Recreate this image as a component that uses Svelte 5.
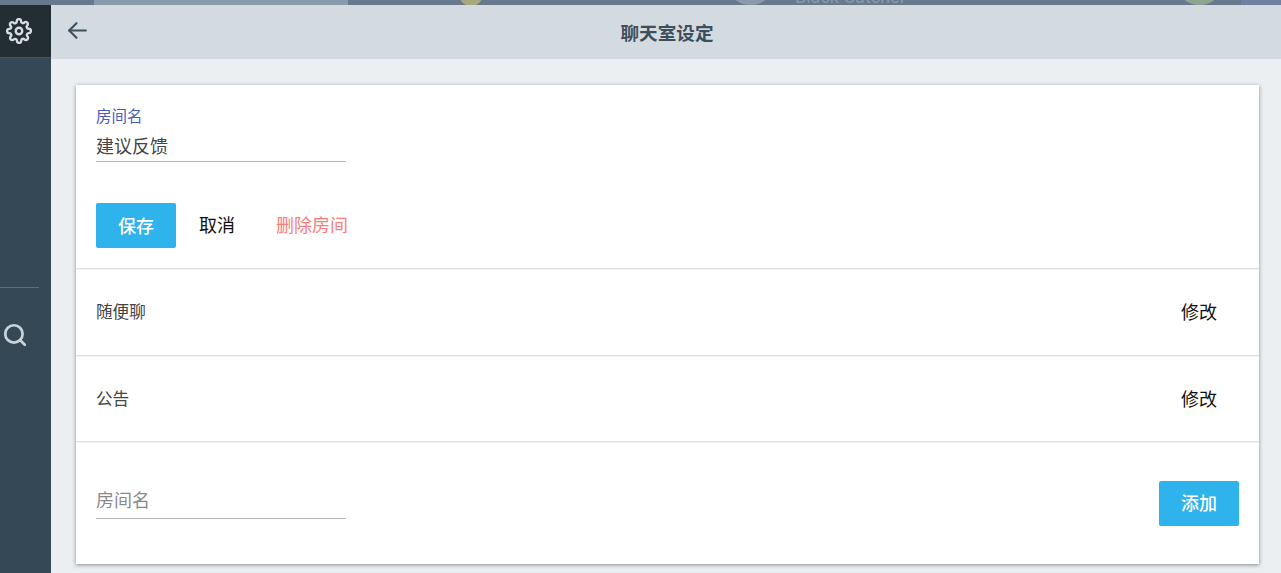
<script>
  let roomName = $state('建议反馈');
  let newRoom = $state('');
  const rooms = ['随便聊', '公告'];
</script>

<div class="strip">
  <span class="hump"></span>
  <span class="sun"></span>
  <span class="face"></span>
  <span class="name">Black Catcher</span>
  <span class="face green"></span>
  <span class="corner"></span>
</div>
<div class="shell">
  <aside class="side">
    <div class="side-head">
      <svg width="26" height="26" viewBox="0 0 24 24" fill="none" stroke="#d5dde2" stroke-width="2.2" stroke-linecap="round" stroke-linejoin="round">
        <circle cx="12" cy="12" r="3" />
        <path d="M19.4 15a1.65 1.65 0 0 0 .33 1.82l.06.06a2 2 0 1 1-2.83 2.83l-.06-.06a1.65 1.65 0 0 0-2.82 1.17V21a2 2 0 1 1-4 0v-.09a1.65 1.65 0 0 0-2.82-1.17l-.06.06a2 2 0 1 1-2.83-2.83l.06-.06a1.65 1.65 0 0 0-1.17-2.82H3a2 2 0 1 1 0-4h.09a1.65 1.65 0 0 0 1.17-2.82l-.06-.06a2 2 0 1 1 2.83-2.83l.06.06a1.65 1.65 0 0 0 2.82-1.17V3a2 2 0 1 1 4 0v.09a1.65 1.65 0 0 0 2.82 1.17l.06-.06a2 2 0 1 1 2.83 2.83l-.06.06a1.65 1.65 0 0 0 1.17 2.82H21a2 2 0 1 1 0 4h-.09a1.65 1.65 0 0 0-1.51 1z" />
      </svg>
    </div>
    <div class="side-rest">
      <div class="side-line"></div>
      <div class="side-search">
        <svg width="26" height="26" viewBox="0 0 24 24" fill="none" stroke="#c9d4da" stroke-width="2.5" stroke-linecap="round" stroke-linejoin="round">
          <circle cx="11" cy="11" r="8" />
          <line x1="21" y1="21" x2="16.65" y2="16.65" />
        </svg>
      </div>
    </div>
  </aside>

  <main class="main">
    <header class="top">
      <button class="back" aria-label="back">
        <svg width="25" height="25" viewBox="0 0 24 24" fill="none" stroke="#3c4f5c" stroke-width="2" stroke-linecap="round" stroke-linejoin="round">
          <line x1="20" y1="12" x2="4" y2="12" />
          <polyline points="11 19 4 12 11 5" />
        </svg>
      </button>
      <h1>聊天室设定</h1>
    </header>

    <div class="content">
      <section class="card">
        <div class="edit">
          <label class="field">
            <span class="float">房间名</span>
            <input bind:value={roomName} />
          </label>
          <div class="actions">
            <button class="primary">保存</button>
            <button class="plain">取消</button>
            <button class="plain danger">删除房间</button>
          </div>
        </div>

        {#each rooms as room}
          <div class="row">
            <span class="room">{room}</span>
            <button class="plain">修改</button>
          </div>
        {/each}

        <div class="add">
          <input class="new" placeholder="房间名" bind:value={newRoom} />
          <button class="primary">添加</button>
        </div>
      </section>
    </div>
  </main>
</div>

<style>
  :global(body) {
    margin: 0;
    overflow: hidden;
    font-family: Roboto, "Noto Sans CJK SC", sans-serif;
  }

  /* what shows of the page behind the dialog */
  .strip {
    height: 5px;
    background: #67798e;
    position: relative;
    overflow: hidden;
  }

  .strip span {
    position: absolute;
  }

  .hump {
    left: 94px;
    top: 0;
    width: 254px;
    height: 5px;
    background: #8a9aad;
  }

  .sun {
    left: 459px;
    top: -18px;
    width: 24px;
    height: 24px;
    border-radius: 50%;
    background: #a9a77e;
  }

  .face {
    left: 726px;
    top: -44px;
    width: 49px;
    height: 49px;
    border-radius: 50%;
    background: #8c9aab;
  }

  .face.green {
    left: 1175px;
    background: #8fa58e;
  }

  .name {
    left: 795px;
    top: -14px;
    font-size: 18px;
    line-height: 21px;
    color: #8a98a9;
  }

  .corner {
    left: 1241px;
    top: 0;
    width: 40px;
    height: 5px;
    background: #6f80a0;
  }

  .shell {
    display: flex;
    height: 568px;
  }

  .side {
    width: 51px;
    flex: none;
    display: flex;
    flex-direction: column;
    background: #344856;
  }

  .side-head {
    height: 52px;
    flex: none;
    background: #232e33;
    border-bottom: 1px solid #46545c;
    display: flex;
    align-items: center;
    padding-left: 6px;
  }

  .side-rest {
    flex: 1;
    padding-top: 229px;
  }

  .side-line {
    width: 39px;
    height: 1px;
    background: #5d6f7b;
  }

  .side-search {
    padding: 34px 0 0 2px;
    display: flex;
  }

  .main {
    flex: 1;
    min-width: 0;
    display: flex;
    flex-direction: column;
    background: #ebeff2;
  }

  .top {
    height: 52px;
    padding: 0 0 2px 2px;
    flex: none;
    background: #d3dae0;
    display: flex;
    align-items: center;
    justify-content: center;
    position: relative;
  }

  .top h1 {
    margin: 0;
    font-size: 18.6px;
    font-weight: 700;
    color: #3c4f5c;
  }

  .back {
    position: absolute;
    left: 14px;
    top: 13px;
    padding: 0;
    border: 0;
    background: none;
    display: flex;
  }

  .content {
    padding: 26px 22px 0 25px;
  }

  .card {
    background: #fff;
    box-shadow: 0 1px 4px rgba(0, 0, 0, 0.42);
  }

  .edit {
    height: 183px;
    padding: 0 20px;
    border-bottom: 1px solid #dcdee0;
    box-shadow: 0 1px 0 #f3f4f5;
  }

  .field {
    display: block;
    width: 250px;
    padding-top: 24px;
  }

  .float {
    display: block;
    font-size: 15.5px;
    line-height: 17px;
    color: #4a5bc4;
  }

  input {
    display: block;
    width: 250px;
    box-sizing: border-box;
    border: 0;
    border-bottom: 1px solid #b5b5b5;
    outline: 0;
    padding: 0;
    background: none;
    font: inherit;
    font-size: 18px;
    color: #444;
  }

  .field input {
    height: 36px;
    padding-top: 2px;
  }

  .new {
    height: 36px;
    margin-bottom: 4px;
  }

  .new::placeholder {
    color: #8a8a8a;
    opacity: 1;
  }

  .actions {
    display: flex;
    align-items: center;
    margin-top: 41px;
  }

  button {
    font: inherit;
    cursor: pointer;
  }

  .primary {
    width: 80px;
    height: 45px;
    border: 0;
    border-radius: 2px;
    background: #2eb3ec;
    color: #fff;
    font-size: 18px;
    font-weight: 500;
    padding: 0 0 2px;
  }

  .plain {
    border: 0;
    background: none;
    padding: 0;
    font-size: 18px;
    color: #111;
  }

  .actions .plain {
    margin-left: 23px;
    padding-bottom: 3px;
  }

  .actions .danger {
    margin-left: 41px;
    color: #fb7d7d;
  }

  .row {
    height: 84px;
    padding: 0 42px 2px 20px;
    display: flex;
    align-items: center;
    justify-content: space-between;
    border-bottom: 1px solid #dcdee0;
    box-shadow: 0 1px 0 #f3f4f5;
  }

  .row + .row {
    height: 83px;
  }

  .room {
    font-size: 16.6px;
    color: #444;
  }

  .add {
    height: 122px;
    padding: 0 20px;
    display: flex;
    align-items: center;
    justify-content: space-between;
  }
</style>
